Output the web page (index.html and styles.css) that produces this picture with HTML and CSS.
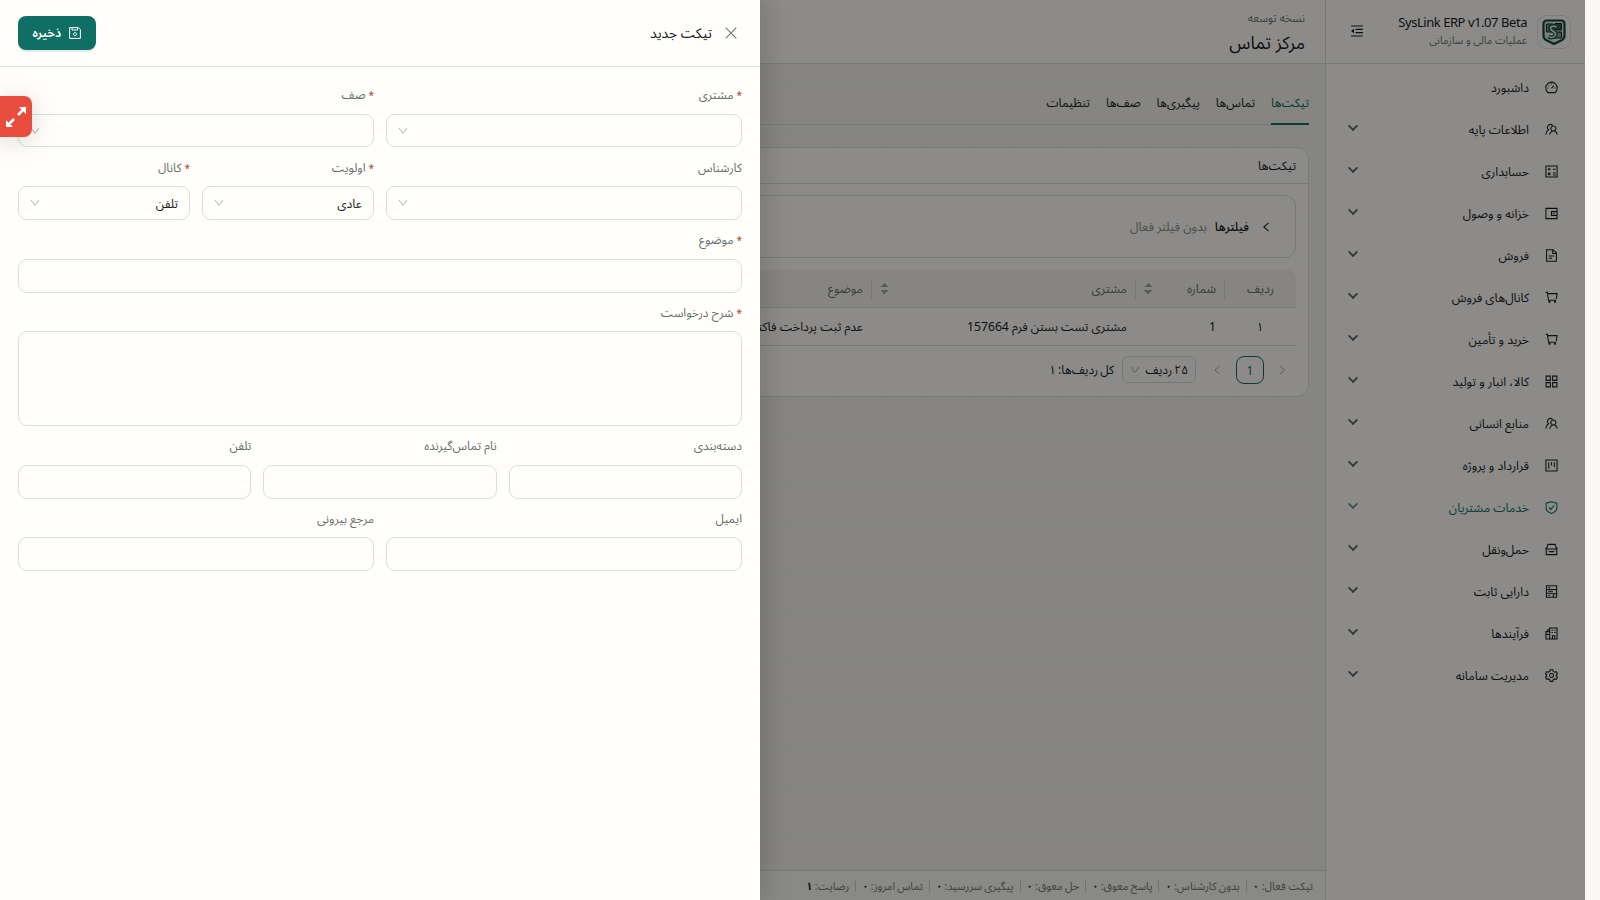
FILE: index.html
```
<!DOCTYPE html>
<html lang="fa" dir="rtl">
<head>
  <meta charset="UTF-8" />
  <meta name="viewport" content="width=device-width, initial-scale=1.0" />
  <title>SysLink ERP - مرکز تماس</title>
  <link rel="stylesheet" href="styles.css">
</head>

<body>

  <!-- Icons -->
  <svg class="sprite">
    <symbol id="i-dash" viewBox="0 0 14 14"><path d="M3 12.500C1.600 11.300.9 9.500.9 7.300A6.100 6.100 0 0 1 13.100 7.300C13.100 9.500 12.400 11.300 11 12.500ZM7 8 9.500 5M7 2.800v1M3.900 4.200l.6.600M2.800 7.600h1M10.300 7.600h1"/></symbol>
    <symbol id="i-users" viewBox="0 0 14 14"><path d="M.8 12.500C1 9.800 2 8.200 3.800 7.200A3 3 0 1 1 8.200 2.500M5 12.500C5.200 10.800 6.200 9.300 8 8.500M10.200 8.300C12 9.300 13 10.800 13.200 12.500M9 3.300a2.700 2.700 0 1 0 .1 0Z"/></symbol>
    <symbol id="i-calc" viewBox="0 0 14 14"><path d="M1 1h12v12H1ZM3 4.500h3M4.500 3v3M8.500 4.500h3M3.200 8.300 5.800 10.900M5.800 8.300 3.200 10.900M8.500 8.700h3M8.500 10.700h3"/></symbol>
    <symbol id="i-wallet" viewBox="0 0 14 14"><path d="M1 1.500h12v11H1ZM13 5H7v4h6M8.800 7h1.200"/></symbol>
    <symbol id="i-file" viewBox="0 0 14 14"><path d="M1.700.8h7l3.600 3.600v8.800H1.700ZM8.300 1v3.800h4M4 7.500h6M4 10h3.500"/></symbol>
    <symbol id="i-cart" viewBox="0 0 14 14"><path d="M.8 1.500h1.800l1.200 8.500h8.200M3 2.800h10l-.8 6"/><path d="M4.800 10.500v2.200M10.800 10.500v2.200" stroke-width="2"/></symbol>
    <symbol id="i-grid" viewBox="0 0 14 14"><path d="M1.200 1.200h4.600v4.600H1.200ZM8.200 1.200h4.600v4.600H8.200ZM1.200 8.200h4.600v4.600H1.200ZM8.200 8.200h4.600v4.600H8.200Z"/></symbol>
    <symbol id="i-project" viewBox="0 0 14 14"><path d="M1 1h12v12H1ZM4 3.500v7M7 3.500v3.500M10 3.500v5"/></symbol>
    <symbol id="i-shield" viewBox="0 0 14 14"><path d="M7 .7 12.800 2.300v5.500C12.800 10.500 10 12.300 7 13.400 4 12.300 1.200 10.500 1.200 7.800V2.300ZM4.300 7l2 2 3.400-4"/></symbol>
    <symbol id="i-car" viewBox="0 0 14 14"><path d="M1.500 6.500 3.200 1.500h7.600l1.700 5M1.300 6.500h11.400v6H1.300ZM.3 5.700h1M12.700 5.700h1M4.500 9.300h5M3 8.800h.6M10.400 8.800h.6"/></symbol>
    <symbol id="i-asset" viewBox="0 0 14 14"><path d="M1.500.8h11v12.400h-11ZM1.500 4.800h11M1.500 8.800h7M3.500 2.800h2M3.500 6.800h5M3.500 11h2M9 13V9.500h3.500"/></symbol>
    <symbol id="i-flow" viewBox="0 0 14 14"><path d="M5 1h8v12H5ZM5 5H1v8h4M1 8h4M7 3.500h1.500M10 3.500h1.500M7 6h1.500M10 6h1.500M8 13V9.500h2.500V13M4.500 3H3v2"/></symbol>
    <symbol id="i-gear" viewBox="0 0 14 14"><path d="M5.600.8h2.800l.5 1.900 1.300.8 1.900-.6 1.400 2.400L12.100 6.500v1.100l1.400 1.300-1.400 2.300-1.900-.5-1.300.8-.5 1.800H5.600l-.5-1.800-1.300-.8-1.900.5L.5 8.900 1.900 7.600V6.500L.5 5.300l1.400-2.400 1.900.6 1.300-.8ZM7 4.800a2.200 2.200 0 1 0 .1 0Z"/></symbol>
    <symbol id="i-down" viewBox="0 0 10 10"><path d="M1 2 5 7.500 9 2"/></symbol>
  </svg>

  <div class="app">
    <aside class="sidebar">
      <div class="brand">
        <div class="brand-logo">
          <svg viewBox="0 0 24 26"><path d="M5 1.500h14q3.500 0 3.500 3.500v11.500q0 3-2.500 4.500L12 25 4 21Q1.500 19.500 1.500 16.500V5Q1.500 1.500 5 1.500Z" fill="#e4e9e3" stroke="#0b4a3e" stroke-width="2.200"/><path d="M4.500 5h7v8h-7ZM12.500 13h7v6h-7Z" fill="#84988f"/><path d="M13 4.500h6.500V11H13Z" fill="#315d54"/><path d="M14 8C12 6.500 8 7 8 9.500s5.500 2.500 5.500 5.500-4 4.500-7 2.500" fill="none" stroke="#08634f" stroke-width="4"/><path d="M14.500 8C12 6.500 8.500 7 8.500 9.500s5 2.500 5 5.500-4 4.500-7 2.500" fill="none" stroke="#f2f5ef" stroke-width="1.500"/></svg>
        </div>
        <div class="brand-text">
          <div class="brand-name" dir="ltr">SysLink ERP v1.07 Beta</div>
          <div class="brand-sub">عملیات مالی و سازمانی</div>
        </div>
        <svg class="fold" viewBox="0 0 12 12"><path d="M0 1h12M4.500 4.300H12M4.500 7.600H12M0 11h12"/><path d="M0 6l3-2.300v4.600Z" class="solid"/></svg>
      </div>
      <nav class="menu">
        <a class="menu-item"><svg><use href="#i-dash"/></svg><span>داشبورد</span></a>
        <a class="menu-item sub"><svg><use href="#i-users"/></svg><span>اطلاعات پایه</span></a>
        <a class="menu-item sub"><svg><use href="#i-calc"/></svg><span>حسابداری</span></a>
        <a class="menu-item sub"><svg><use href="#i-wallet"/></svg><span>خزانه و وصول</span></a>
        <a class="menu-item sub"><svg><use href="#i-file"/></svg><span>فروش</span></a>
        <a class="menu-item sub"><svg><use href="#i-cart"/></svg><span>کانال‌های فروش</span></a>
        <a class="menu-item sub"><svg><use href="#i-cart"/></svg><span>خرید و تأمین</span></a>
        <a class="menu-item sub"><svg><use href="#i-grid"/></svg><span>کالا، انبار و تولید</span></a>
        <a class="menu-item sub"><svg><use href="#i-users"/></svg><span>منابع انسانی</span></a>
        <a class="menu-item sub"><svg><use href="#i-project"/></svg><span>قرارداد و پروژه</span></a>
        <a class="menu-item sub active"><svg><use href="#i-shield"/></svg><span>خدمات مشتریان</span></a>
        <a class="menu-item sub"><svg><use href="#i-car"/></svg><span>حمل‌ونقل</span></a>
        <a class="menu-item sub"><svg><use href="#i-asset"/></svg><span>دارایی ثابت</span></a>
        <a class="menu-item sub"><svg><use href="#i-flow"/></svg><span>فرآیندها</span></a>
        <a class="menu-item sub"><svg><use href="#i-gear"/></svg><span>مدیریت سامانه</span></a>
      </nav>
    </aside>

    <main class="main">
      <header class="topbar">
        <div class="top-sub">نسخه توسعه</div>
        <h1>مرکز تماس</h1>
      </header>

      <div class="content">
        <div class="tabs">
          <a class="tab active">تیکت‌ها</a>
          <a class="tab">تماس‌ها</a>
          <a class="tab">پیگیری‌ها</a>
          <a class="tab">صف‌ها</a>
          <a class="tab">تنظیمات</a>
        </div>

        <section class="card">
          <h2>تیکت‌ها</h2>
          <div class="card-body">
            <div class="filter">
              <svg viewBox="0 0 10 10"><path d="M7.500.8 2.800 5l4.700 4.200"/></svg>
              <strong>فیلترها</strong>
              <span>بدون فیلتر فعال</span>
            </div>
            <div class="row head">
              <div class="cell c-index">ردیف</div>
              <div class="cell c-num">شماره<i class="sorter"></i></div>
              <div class="cell c-customer">مشتری<i class="sorter"></i></div>
              <div class="cell c-subject">موضوع</div>
            </div>
            <div class="row">
              <div class="cell c-index">۱</div>
              <div class="cell c-num">1</div>
              <div class="cell c-customer">مشتری تست بستن فرم 157664</div>
              <div class="cell c-subject">عدم ثبت پرداخت فاکتور</div>
            </div>
            <div class="pager">
              <svg viewBox="0 0 10 10"><path d="M3 1l4.500 4L3 9"/></svg>
              <span class="page">1</span>
              <svg viewBox="0 0 10 10"><path d="M7.500 1 3 5l4.500 4"/></svg>
              <span class="page-size">۲۵ ردیف <svg><use href="#i-down"/></svg></span>
              <span class="total">کل ردیف‌ها: ۱</span>
            </div>
          </div>
        </section>
      </div>

      <footer class="statusbar">
        <span>تیکت فعال: <b>۰</b></span>
        <span>بدون کارشناس: <b>۰</b></span>
        <span>پاسخ معوق: <b>۰</b></span>
        <span>حل معوق: <b>۰</b></span>
        <span>پیگیری سررسید: <b>۰</b></span>
        <span>تماس امروز: <b>۰</b></span>
        <span>رضایت: <b>۱</b></span>
      </footer>
    </main>
  </div>

  <div class="mask"></div>

  <!-- New ticket drawer -->
  <section class="drawer">
    <header class="drawer-head">
      <svg class="close" viewBox="0 0 12 12"><path d="M.7.7l10.600 10.600M11.300.7.7 11.300"/></svg>
      <h3>تیکت جدید</h3>
      <button class="save"><svg viewBox="0 0 12 12"><path d="M.6.6h8.800l2 2v8.800H.6ZM3 .6v2.400h5.500V.6M6 5.600a1.500 1.500 0 1 0 .1 0Z"/></svg>ذخیره</button>
    </header>
    <form class="form">
      <div class="field w6"><label class="req">مشتری</label><div class="control select"><svg><use href="#i-down"/></svg></div></div>
      <div class="field w6"><label class="req">صف</label><div class="control select"><svg><use href="#i-down"/></svg></div></div>
      <div class="field w6"><label>کارشناس</label><div class="control select"><svg><use href="#i-down"/></svg></div></div>
      <div class="field w3"><label class="req">اولویت</label><div class="control select"><span>عادی</span><svg><use href="#i-down"/></svg></div></div>
      <div class="field w3"><label class="req">کانال</label><div class="control select"><span>تلفن</span><svg><use href="#i-down"/></svg></div></div>
      <div class="field w12"><label class="req">موضوع</label><div class="control"></div></div>
      <div class="field w12"><label class="req">شرح درخواست</label><div class="control area"></div></div>
      <div class="field w4"><label>دسته‌بندی</label><div class="control"></div></div>
      <div class="field w4"><label>نام تماس‌گیرنده</label><div class="control"></div></div>
      <div class="field w4"><label>تلفن</label><div class="control"></div></div>
      <div class="field w6"><label>ایمیل</label><div class="control"></div></div>
      <div class="field w6"><label>مرجع بیرونی</label><div class="control"></div></div>
    </form>
  </section>

  <div class="expand"><svg viewBox="0 0 20 20"><path d="M12 8l4.500-4.500M8 12l-4.500 4.500"/><path d="M13 0H20v7ZM0 13V20h7Z" class="solid"/></svg></div>

</body>
</html>
```
FILE: styles.css
```
* { margin: 0; padding: 0; box-sizing: border-box; }
body {
  height: 900px;
  overflow: hidden;
  background: #f9f8f4;
  color: #17201e;
  font-family: 'Noto Sans', 'Noto Sans Arabic', 'DejaVu Sans', sans-serif;
  font-size: 12.2px;
  line-height: 20px;
}
svg { fill: none; stroke: currentColor; stroke-width: 1; flex: none; }
svg .solid { fill: currentColor; stroke: none; }
.sprite { position: absolute; width: 0; height: 0; }

/* --- layout --- */
.app {
  display: flex;
  width: 1585px;
  height: 900px;
  margin-right: 15px;
}
.sidebar {
  width: 260px;
  flex: none;
  background: #fffefa;
  border-left: 1px solid #d8ddd6;
}
.brand {
  display: flex;
  align-items: center;
  height: 64px;
  padding: 0 14px 0 25px;
  border-bottom: 1px solid #d8ddd6;
}
.brand-logo {
  display: flex;
  align-items: center;
  justify-content: center;
  width: 34px;
  height: 34px;
  border: 1px solid #e4e2da;
  border-radius: 9px;
}
.brand-logo svg { width: 24px; height: 26px; }
.brand-text { margin-right: 10px; padding-bottom: 2px; flex: 1; text-align: right; }
.brand-name { font-size: 13px; line-height: 18px; letter-spacing: -.45px; }
.brand-sub { font-size: 10.5px; line-height: 18px; color: #6d7773; }
.fold { width: 12px; height: 12px; margin-bottom: 1px; stroke-width: 1.2; }

.menu { padding-top: 2px; }
.menu-item {
  display: flex;
  align-items: center;
  height: 42px;
  padding: 0 27px 0 23px;
}
.menu-item > svg { width: 13px; height: 13px; stroke-width: 1.15; }
.menu-item span { flex: 1; margin-right: 16px; padding-top: 2px; }
.menu-item.sub::after {
  content: "";
  width: 6px;
  height: 6px;
  margin: -6px 0 0;
  border: solid currentColor;
  border-width: 0 2px 2px 0;
  transform: rotate(45deg) scale(.9);
  opacity: .7;
}
.menu-item.active { color: #0f6f64; }

.main {
  flex: 1;
  min-width: 0;
  display: flex;
  flex-direction: column;
}
.topbar {
  height: 64px;
  padding: 8px 20px 0;
  background: #fffefa;
  border-bottom: 1px solid #d8ddd6;
}
.top-sub { font-size: 11.3px; color: #6d7773; }
.topbar h1 { font-size: 17.5px; font-weight: 400; line-height: 29px; }
.content {
  flex: 1;
  padding: 18px 16px;
  background-color: #f4f3ed;
  background-image:
    linear-gradient(to right, rgba(15, 111, 100, .03) 1px, transparent 1px),
    linear-gradient(to bottom, rgba(15, 111, 100, .03) 1px, transparent 1px);
  background-size: 44px 44px;
  background-position: 1px 23px;
}
.tabs {
  display: flex;
  gap: 16px;
  height: 43px;
  border-bottom: 1px solid #d8ddd6;
  font-size: 12.1px;
}
.tab { height: 43px; padding-top: 11px; }
.tab.active { color: #0f6f64; border-bottom: 2px solid #0f6f64; }

/* --- tickets card --- */
.card {
  margin-top: 22px;
  height: 250px;
  background: #fffefa;
  border: 1px solid #d8ddd6;
  border-radius: 12px;
}
.card h2 {
  height: 36px;
  padding: 8px 12px;
  font-size: 12.1px;
  font-weight: 400;
  border-bottom: 1px solid #d8ddd6;
}
.card-body { padding: 11px 12px; }
.filter {
  display: flex;
  align-items: center;
  height: 63px;
  margin-bottom: 12px;
  padding-right: 24px;
  border: 1px solid #d8ddd6;
  border-radius: 11px;
}
.filter svg { width: 10px; height: 10px; margin-left: 12px; stroke-width: 1.1; }
.filter strong { font-weight: 500; }
.filter span { margin-right: 8px; color: #838b87; }
.row {
  display: flex;
  align-items: center;
  height: 38px;
  border-bottom: 1px solid #d8ddd6;
}
.row.head { background: #f4f3ed; color: #66706c; border-radius: 0 8px 0 0; }
.cell {
  display: flex;
  align-items: center;
  justify-content: space-between;
  padding: 0 9px 0 8px;
  height: 22px;
  white-space: nowrap;
}
.head .cell { padding-right: 8px; }
.head .cell + .cell { border-right: 1px solid #dedfd9; }
.c-index { width: 71px; justify-content: center; }
.c-num { width: 89px; }
.c-customer { width: 264px; }
.c-subject { width: 264px; }
.sorter {
  width: 8px;
  height: 11px;
  margin-bottom: 1px;
  background:
    conic-gradient(from 135deg at 50% 0, #a3a8a5 90deg, transparent 0) top / 8px 4px no-repeat,
    conic-gradient(from -45deg at 50% 100%, #a3a8a5 90deg, transparent 0) bottom / 8px 4px no-repeat;
}
.pager { display: flex; align-items: center; height: 47px; padding-right: 9px; font-size: 12px; }
.pager svg { width: 10px; height: 10px; color: #a3a8a5; }
.page {
  width: 28px;
  height: 28px;
  margin: 0 13px 0 14px;
  border: 1px solid #0f6f64;
  border-radius: 8px;
  color: #0f6f64;
  line-height: 27px;
  text-align: center;
}
.page-size {
  display: flex;
  align-items: center;
  justify-content: space-between;
  width: 74px;
  height: 27px;
  margin: 0 16px 0 8px;
  padding: 0 7px;
  border: 1px solid #d8ddd6;
  border-radius: 6px;
  word-spacing: -1px;
}
.total { word-spacing: -1px; }
.statusbar {
  display: flex;
  align-items: center;
  height: 30px;
  padding-right: 12px;
  background: #fafaf5;
  border-top: 1px solid #d8ddd6;
  color: #6d7773;
  font-size: 10.8px;
}
.statusbar b { color: #17201e; font-weight: 700; }
.statusbar span + span {
  margin-right: 6px;
  padding-right: 6px;
  border-right: 1px solid #ccd2cb;
  line-height: 12px;
  word-spacing: -.5px;
}

/* --- drawer --- */
.mask {
  position: absolute;
  top: 0;
  left: 0;
  width: 1585px;
  height: 900px;
  background: rgba(0, 0, 0, .45);
}
.drawer {
  position: absolute;
  top: 0;
  left: 0;
  width: 760px;
  height: 900px;
  background: #fffefa;
  box-shadow: 6px 0 16px rgba(0, 0, 0, .08), 9px 0 28px rgba(0, 0, 0, .05);
}
.drawer-head {
  display: flex;
  align-items: center;
  height: 67px;
  padding: 0 23px 0 18px;
  border-bottom: 1px solid #dcded9;
}
.close { width: 12px; height: 12px; color: #777c79; stroke-width: 1.2; }
.drawer-head h3 { flex: 1; margin-right: 13px; font-size: 13.8px; font-weight: 400; }
.save {
  display: flex;
  align-items: center;
  gap: 8px;
  width: 78px;
  height: 34px;
  padding: 0 15px 0 0;
  border: 0;
  border-radius: 8px;
  background: #0f6f64;
  box-shadow: 0 2px 0 rgba(15, 111, 100, .12);
  color: #fff;
  font: inherit;
  font-weight: 600;
}
.save svg { width: 12px; height: 12px; }
.form {
  display: grid;
  grid-template-columns: repeat(12, 1fr);
  gap: 12px;
  padding: 20.4px 18px;
}
.w3 { grid-column: span 3; }
.w4 { grid-column: span 4; }
.w6 { grid-column: span 6; }
.w12 { grid-column: span 12; }
.field label {
  display: block;
  height: 26.6px;
  line-height: 16px;
  font-size: 12px;
  color: #66706c;
}
.req::before { content: "*"; margin-left: 3px; font-size: 10px; color: #a8403c; }
.control {
  display: flex;
  align-items: center;
  height: 33.8px;
  padding: 0 11px;
  border: 1px solid #dcded9;
  border-radius: 9px;
}
.control.select { height: 33.4px; margin-bottom: .4px; }
.control span { padding-top: 2px; font-size: 12.2px; }
.control svg { width: 10px; height: 10px; margin-right: auto; color: #b0b4b1; }
.control.area { height: 95px; }

.expand {
  position: absolute;
  left: 0;
  top: 96px;
  display: flex;
  align-items: center;
  justify-content: center;
  width: 32px;
  height: 41px;
  border-radius: 0 8px 8px 0;
  background: #e74c3c;
  box-shadow: 0 4px 24px rgba(0, 0, 0, .16);
  color: #fff;
}
.expand svg { width: 20px; height: 20px; stroke-width: 2.6; }
```
